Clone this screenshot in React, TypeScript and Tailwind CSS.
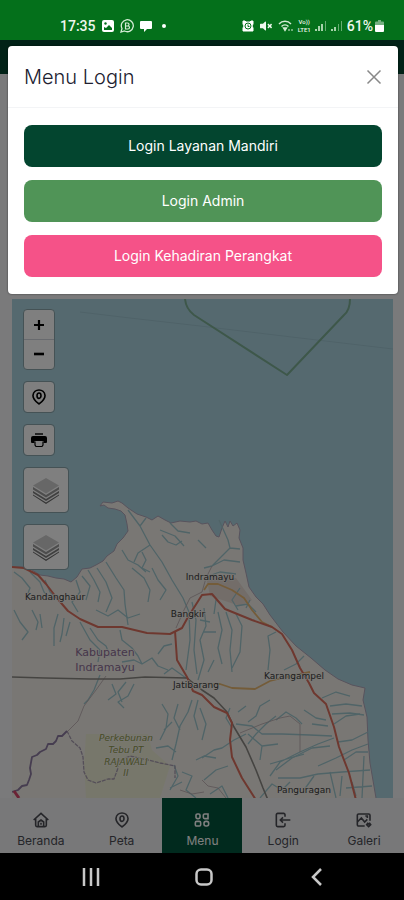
import type { ReactNode } from "react"
import { FaVolumeMute } from "react-icons/fa"

const SEA = "#aad3df"
const LAND = "#f2efe9"

const coast =
  "M12 567 24 567 32 570 40 575 48 576 56 578 64 579 71 582 77 577 82 569 90 568 96 565 103 561 107 556 114 551 117 544 123 538 128 531 127 524 125 515 121 511 115 509 108 508 104 505 100 506 103 502 112 503 118 501 122 503 128 508 137 514 146 517 152 520 158 516 165 520 171 523 180 521 190 522 196 521 202 524 208 523 212 530 216 536 219 537 222 528 225 521 228 527 230 521 233 526 237 523 240 530 239 538 243 548 243 560 246 573 249 587 256 597 263 604 270 615 283 632 296 646 311 658 325 670 338 679 352 685 365 688 363 700 367 717 368 740 370 763 376 798 V850 H-60 V567Z"

const rivers = [
  "M128 510 140 526 150 545 162 562 172 580 183 598 189 612 190 640 186 670",
  "M140 526 146 518M150 545 138 553 134 562M162 535 168 542 176 545 182 541M160 530 175 536 184 546M170 523 178 531 190 533",
  "M88 570 94 580 100 592 98 602M97 568 106 582 112 598 106 612M106 562 116 578 124 590 125 604 128 625",
  "M122 550 128 560 138 565 146 572M132 568 144 578 150 590 148 602M142 552 146 560 142 568 150 572M152 568 158 580 166 590 160 600",
  "M14 572 22 578 30 588 26 598M30 572 40 582 44 592 52 600M45 580 50 592 58 600M14 610 20 622 28 632 22 640M32 610 38 622 36 630M40 614 42 628",
  "M58 614 54 628 54 646M64 618 62 634 60 642M70 622 66 636M80 622 90 640 100 650 98 662M90 628 98 640 106 646 110 656",
  "M76 580 80 592 72 602 78 612M82 576 90 586 86 600M96 610 108 616 118 610 128 618 140 614",
  "M120 630 122 640 132 648 138 656 142 664M122 662 134 660 142 664 152 658 158 666 168 670M158 654 164 646 172 644M164 674 172 668 186 678",
  "M100 675 94 690 88 700 84 704M126 682 118 692 122 702M134 684 128 696 118 702 124 708M112 684 116 694 108 700",
  "M162 704 168 714 166 728 160 740M178 704 174 718 180 730M172 722 164 730M192 700 188 712 180 726 176 744 172 760M156 748 168 746 176 752",
  "M174 765 178 776 170 790M182 772 192 776 186 790 196 798M170 788 182 782M196 760 204 756 216 758",
  "M219 520 228 540 230 548 222 556 212 566 204 568M230 548 240 549M212 566 224 560 240 562M198 540 206 548M208 576 220 572 236 574",
  "M192 602 196 620 194 650 197 674M204 608 206 626 200 640 204 660 198 680M218 612 222 630 218 648 222 664M226 612 232 630 230 650 232 672",
  "M204 632 216 632M236 614 242 626 240 652 232 668M276 632 268 636 270 650 268 670M200 620 210 622M214 660 208 672",
  "M240 588 232 600 238 610M236 606 248 604 256 612M250 600 246 608M216 600 214 614",
  "M284 670 296 664 304 656M322 698 336 692 350 696M330 706 346 704 362 706M332 714 350 713 364 715",
  "M270 700 260 706 256 716 248 722M276 716 266 724 256 734 248 744M276 720 286 712 296 718 302 724",
  "M202 758 214 750 222 748 234 740 246 734M204 780 216 770 228 766M236 724 252 726 262 734 282 734 310 735 332 736",
  "M248 734 262 746 260 760M262 746 278 744M270 776 280 762 300 752 318 744 334 738M270 764 290 758 304 754",
  "M276 770 292 758 312 748 330 746M318 766 336 758 352 750 368 744M278 778 300 778 318 774 342 772 370 770",
  "M334 724 346 716 360 714M338 742 352 740 368 732M344 760 356 752 368 752M304 710 316 718 326 720M312 724 328 726",
  "M304 790 314 776M330 772 336 798M342 776 340 796M352 782 356 796M364 756 362 798M346 788 372 786",
  "M230 708 226 718 232 728M238 712 246 706M198 700 194 716 198 730M200 708 206 724 202 740",
  "M260 798 272 784 282 790 290 782M210 794 222 786 228 798",
]

const minorRoads = [
  "M68 731 78 721 84 706 96 690 106 676",
  "M202 592 190 598 184 610 176 628M202 592 206 578 212 566",
  "M240 733 262 724 280 718 290 716 300 724 300 752",
  "M202 780 208 786 218 788 226 798",
  "M180 790 192 794 204 792",
]

function MapDrawing() {
  return (
    <svg
      viewBox="12 299 381 499"
      preserveAspectRatio="xMidYMin slice"
      className="absolute inset-0 h-full w-full"
      role="img"
      aria-label="Peta Kabupaten Indramayu"
      fill="none"
      strokeLinejoin="round"
    >
      <rect x="-60" y="299" width="600" height="600" fill={SEA} />
      <path d={coast} fill={LAND} stroke="#b0a6ba" strokeWidth="1" />
      <path d="M206 576 236 578 252 600 240 606 210 596Z" fill="#e6dad3" />
      <path d="M86 734 148 734 152 750 170 766 160 798 86 798 84 764Z" fill="#eef0cf" opacity=".7" />

      <path d="M80 312 130 318 200 326 300 338 393 349" stroke="#9fc5d1" strokeWidth="1" />
      <path d="M185 299 Q186 309 194 315 L287 375 344 315 Q350 310 350 299" stroke="#7caf94" strokeWidth="2" />

      <g stroke="#a0c8cf" strokeWidth="1.3">
        {rivers.map((d) => (
          <path key={d} d={d} />
        ))}
      </g>
      <g stroke="#b7a8ac" strokeWidth=".8">
        {minorRoads.map((d) => (
          <path key={d} d={d} />
        ))}
      </g>

      <path
        d="M67 731 72 741 80 748 83 757 84 772 88 780 96 783 108 779 114 779 118 768 117 762 130 756 148 760 160 763 175 766 175 778"
        stroke="#a99db0"
        strokeWidth="1.3"
        strokeDasharray="4 1"
      />
      <path
        d="M12 792 18 790 22 786 27 785 29 780 31 774 30 768 32 757 37 755 40 752 46 749 48 744 53 744 56 741 58 736 62 736 67 731"
        stroke="#8d7aa0"
        strokeWidth="1.8"
      />
      <path d="M14 791 19 798" stroke="#d6476b" strokeWidth="3" />

      <path
        d="M12 677 45 678 90 679 120 679 145 677 187 678 202 690 214 698 227 712 234 727 246 747 256 770 263 788 268 800"
        stroke="#8b8883"
        strokeWidth="1.6"
      />
      <g stroke="#e8b873" strokeWidth="1.8">
        <path d="M204 590 208 584 218 584 232 590 244 598 252 610 262 622 272 627" />
        <path d="M202 684 220 684 232 688 255 689 270 681 286 677 310 672" />
      </g>
      <g stroke="#dd705f" strokeWidth="2">
        <path d="M12 567 24 568 38 575 46 584 56 597 68 611 80 619 98 627 122 627 147 633 170 634 182 628 188 617 202 595 212 594 225 609 252 620 272 627 282 634 292 650 300 668 309 683 314 693 326 704 334 727 339 747 349 773 356 800" />
        <path d="M175 631 177 660 187 677 193 691 202 695 214 707 227 713 232 723 230 740 232 757 242 778 256 800" />
      </g>

      <g
        className="font-['DejaVu_Sans',sans-serif]"
        fill="#3a3a3a"
        stroke="#f2efe9"
        strokeWidth="1.5"
        paintOrder="stroke"
        textAnchor="middle"
        fontSize="9"
      >
        <text x="210" y="580">Indramayu</text>
        <text x="55" y="600">Kandanghaur</text>
        <text x="188" y="617">Bangkir</text>
        <text x="196" y="688">Jatibarang</text>
        <text x="294" y="679">Karangampel</text>
        <text x="304" y="793">Panguragan</text>
        <g fill="#8d6c96" fontSize="11">
          <text x="105" y="656">Kabupaten</text>
          <text x="105" y="671">Indramayu</text>
        </g>
        <g fill="#8f9a4a" fontStyle="italic">
          <text x="126" y="741">Perkebunan</text>
          <text x="126" y="753">Tebu PT</text>
          <text x="126" y="765">RAJAWALI</text>
          <text x="126" y="776">II</text>
        </g>
      </g>
    </svg>
  )
}

function LayersIcon() {
  return (
    <svg viewBox="0 0 28 28" className="h-7 w-7" aria-hidden="true">
      <path d="M1 9.500 14 2 27 9.500 14 17.500Z" fill="#cfcfcf" />
      <path d="M1 11 14 19 27 11V13.500L14 21.500 1 13.500Z" fill="#9a9a9a" />
      <path d="M1 15 14 23 27 15V17L14 25 1 17Z" fill="#7e7e7e" />
      <path d="M1 18.500 14 26.500 27 18.500V19.500L14 28 1 19.500Z" fill="#6b6b6b" />
    </svg>
  )
}

function PinIcon({ className }: { className: string }) {
  return (
    <svg viewBox="0 0 24 24" className={className} fill="none" stroke="currentColor" strokeWidth="2.400" aria-hidden="true">
      <path d="M12 22.500C9 20 2.500 15.500 3 9.500 3.500 4.500 7.500 1.500 12 1.500s8.500 3 9 8C21.500 15.500 15 20 12 22.500Z" />
      <ellipse cx="12" cy="10" rx="3" ry="4" />
    </svg>
  )
}

function PrinterIcon() {
  return (
    <svg viewBox="0 0 16 16" className="h-4 w-4" fill="currentColor" aria-hidden="true">
      <path d="M4 1h8v2H4Z" opacity=".7" />
      <path d="M2 4h12a2 2 0 0 1 2 2v4a1 1 0 0 1-1 1h-2.500V9h-9v2H1a1 1 0 0 1-1-1V6a2 2 0 0 1 2-2Z" />
      <path d="M4 9.500V13l1 1.500h6l1-1.500V9.500" fill="none" stroke="currentColor" strokeWidth="1.200" />
    </svg>
  )
}

function MapButton({ label, large, children }: { label: string; large?: boolean; children: ReactNode }) {
  return (
    <button
      type="button"
      aria-label={label}
      className={`flex items-center justify-center rounded border border-[#8aa4aa] bg-white bg-clip-padding text-black ${
        large ? "h-[46px] w-[46px]" : "h-8 w-8"
      }`}
    >
      {children}
    </button>
  )
}

function MapControls() {
  return (
    <div className="relative flex flex-col items-start gap-[11px] px-[11px] pt-[10px]">
      <div className="flex w-8 flex-col rounded border border-[#8aa4aa] bg-white text-black">
        <button type="button" aria-label="Zoom in" className="flex h-[30px] items-center justify-center border-b border-gray-300">
          <svg viewBox="0 0 12 12" className="h-3 w-3" stroke="currentColor" strokeWidth="2.200" aria-hidden="true">
            <path d="M1 6h10M6 1v10" />
          </svg>
        </button>
        <button type="button" aria-label="Zoom out" className="flex h-[29px] items-center justify-center">
          <svg viewBox="0 0 12 12" className="h-3 w-3" stroke="currentColor" strokeWidth="2.600" aria-hidden="true">
            <path d="M1 5h10" />
          </svg>
        </button>
      </div>
      <MapButton label="Lokasi">
        <PinIcon className="h-4 w-4" />
      </MapButton>
      <MapButton label="Cetak">
        <PrinterIcon />
      </MapButton>
      <MapButton label="Lapisan peta" large>
        <LayersIcon />
      </MapButton>
      <MapButton label="Lapisan data" large>
        <LayersIcon />
      </MapButton>
    </div>
  )
}

function StatusBar() {
  return (
    <div className="flex h-10 items-end justify-between bg-[#04701b] pr-5 pb-1 pl-[60px] font-[Roboto,sans-serif] text-sm font-medium text-[#eef7ee]">
      <div className="flex items-center gap-[6px]">
        <span>17:35</span>
        <svg viewBox="0 0 12 12" className="h-3 w-3" aria-hidden="true">
          <rect width="12" height="12" rx="2" fill="#fff" />
          <circle cx="3.500" cy="3.500" r="1.200" fill="#04701b" />
          <path d="M2 9V7l2 1 3-3 3 3v2H2Z" fill="#04701b" />
        </svg>
        <svg viewBox="0 0 14 14" className="h-3.5 w-3.5" fill="none" stroke="#d5ecd6" aria-hidden="true">
          <path d="M1 13 2 9.500A6 6 0 1 1 4.500 12Z" strokeWidth="1.300" />
          <path d="M5.500 4h2a1.400 1.400 0 0 1 0 3h-2Zm0 3h2.500a1.400 1.400 0 0 1 0 3H5.500Z" strokeWidth="1.200" />
        </svg>
        <svg viewBox="0 0 12 12" className="h-3 w-3" fill="#fff" aria-hidden="true">
          <path d="M1 1h10a1 1 0 0 1 1 1v6a1 1 0 0 1-1 1H7l-3 3V9H1a1 1 0 0 1-1-1V2a1 1 0 0 1 1-1Z" />
        </svg>
        <span className="ml-1 h-1 w-1 rounded-full bg-white" />
      </div>
      <div className="flex items-center gap-1">
        <svg viewBox="0 0 12 12" className="h-3 w-3" aria-hidden="true">
          <path d="M1 1h2l1 1h4l1-1h2v3l-1 2 1 2v3H1V8l1-2-1-2Z" fill="#fff" stroke="#fff" />
          <circle cx="6" cy="6" r="3" fill="none" stroke="#04701b" />
          <path d="M6 4.500v2h1.500" fill="none" stroke="#04701b" />
        </svg>
        <FaVolumeMute className="ml-0.5 h-3 w-3" />
        <svg viewBox="0 0 16 12" className="ml-0.5 h-3 w-4" fill="none" stroke="#d5ecd6" strokeWidth="1.400" aria-hidden="true">
          <path d="M1 4a8 8 0 0 1 12 0M3.500 6.500a5 5 0 0 1 7 0" />
          <path d="M5.500 8 7 10.500 8.500 8Z" fill="#d5ecd6" />
          <path d="M11 9v2M14 9v2" strokeWidth="1" />
        </svg>
        <span className="flex flex-col text-center text-[6px] leading-[8px]">
          <span>Vo))</span>
          <span>LTE1</span>
        </span>
        <svg viewBox="0 0 12 12" className="h-3 w-3" fill="#a8d3ac" aria-hidden="true">
          <path d="M0 9h2v2H0Zm3-3h2v5H3Zm3-2h2v7H6Z" />
          <path d="M10 1h1v10h-1Z" opacity=".6" />
        </svg>
        <svg viewBox="0 0 12 12" className="h-3 w-3" fill="#a8d3ac" aria-hidden="true">
          <path d="M0 9h2v2H0Zm3-2h2v4H3Z" />
          <path d="M7 4h1v7H7Zm3-3h1v10h-1Z" opacity=".6" />
        </svg>
        <span className="flex items-center gap-0.5">
          61%
          <svg viewBox="0 0 9 12" className="h-3 w-[9px]" fill="#fff" aria-hidden="true">
            <path d="M3 0h3v1.500h2a1 1 0 0 1 1 1V5H0V2.500a1 1 0 0 1 1-1h2Z" opacity=".45" />
            <path d="M0 5h9v6a1 1 0 0 1-1 1H1a1 1 0 0 1-1-1Z" />
          </svg>
        </span>
      </div>
    </div>
  )
}

function NavIcon({ children }: { children: ReactNode }) {
  return (
    <svg viewBox="0 0 24 24" className="h-4 w-4" fill="none" stroke="currentColor" strokeWidth="2.400" aria-hidden="true">
      {children}
    </svg>
  )
}

const navItems = [
  {
    label: "Beranda",
    icon: (
      <NavIcon>
        <path d="M1 12 12 2l11 10M4 10v10a2 2 0 0 0 2 2h12a2 2 0 0 0 2-2V10" />
        <path d="M8 22v-7l4-3 4 3v7M12 16v3" />
      </NavIcon>
    ),
  },
  { label: "Peta", icon: <PinIcon className="h-4 w-4" /> },
  {
    label: "Menu",
    active: true,
    icon: (
      <NavIcon>
        <rect x="3" y="3" width="6" height="7" rx="2" />
        <path d="M21 3v7h-5a2 2 0 0 1-2-2V5a2 2 0 0 1 2-2Z" />
        <rect x="2" y="14" width="8" height="7" rx="2" />
        <rect x="15" y="14" width="7" height="7" rx="3" />
      </NavIcon>
    ),
  },
  {
    label: "Login",
    icon: (
      <NavIcon>
        <path d="M15 7V4a2 2 0 0 0-2-2H4a2 2 0 0 0-2 2v16a2 2 0 0 0 2 2h9a2 2 0 0 0 2-2v-3" />
        <path d="M23 12H8M12 8l-4 4 4 4" />
      </NavIcon>
    ),
  },
  {
    label: "Galeri",
    icon: (
      <NavIcon>
        <path d="M13 21H4a2 2 0 0 1-2-2V5a2 2 0 0 1 2-2h15a2 2 0 0 1 2 2v8" />
        <path d="M2 15l6-6 5 6 4-4M14 6h3v3" />
        <path d="M19 22l-3-3 1.500-2 1.500 1 1.500-1L22 19Z" />
      </NavIcon>
    ),
  },
]

function BottomNav() {
  return (
    <nav className="grid h-[55px] grid-cols-5 bg-[#f0f0f2]">
      {navItems.map((item) => (
        <a
          key={item.label}
          href="#"
          className={`flex flex-col items-center gap-[5px] pt-[14px] pl-px text-xs ${
            item.active ? "bg-[#03543c] text-white" : "text-[#4a4b52]"
          }`}
        >
          {item.icon}
          <span>{item.label}</span>
        </a>
      ))}
    </nav>
  )
}

function LoginDialog() {
  return (
    <div
      role="dialog"
      aria-labelledby="login-title"
      className="absolute top-1.5 right-1.5 left-2 rounded bg-white shadow-[0_0_2px_rgba(0,0,0,0.6)]"
    >
      <div className="flex h-[62px] items-center justify-between border-b border-gray-100 px-4">
        <h2 id="login-title" className="text-xl font-light text-[#212130]">
          Menu Login
        </h2>
        <button type="button" aria-label="Tutup" className="text-[#888]">
          <svg viewBox="0 0 16 16" className="h-4 w-4" stroke="currentColor" strokeWidth="1.500" aria-hidden="true">
            <path d="M1.500 1.500l13 13M14.500 1.500l-13 13" />
          </svg>
        </button>
      </div>
      <div className="flex flex-col gap-[13px] px-4 pt-[17px] pb-[17px] text-sm text-white">
        <button type="button" className="h-[42px] rounded-lg bg-[#03452f]">
          Login Layanan Mandiri
        </button>
        <button type="button" className="h-[42px] rounded-lg bg-[#509457]">
          Login Admin
        </button>
        <button type="button" className="h-[42px] rounded-lg bg-[#f55288]">
          Login Kehadiran Perangkat
        </button>
      </div>
    </div>
  )
}

function SystemBar() {
  return (
    <div className="flex h-[47px] items-center justify-around bg-black pr-[30px] pl-[34px] text-[#c8c8c8]">
      <button type="button" aria-label="Aplikasi terbaru">
        <svg viewBox="0 0 18 18" className="h-[18px] w-[18px]" stroke="currentColor" strokeWidth="2.500" aria-hidden="true">
          <path d="M2 0v18M9 0v18M16 0v18" />
        </svg>
      </button>
      <button type="button" aria-label="Layar utama">
        <svg viewBox="0 0 18 18" className="h-[18px] w-[18px]" fill="none" stroke="currentColor" strokeWidth="2.500" aria-hidden="true">
          <rect x="1.500" y="1.500" width="15" height="15" rx="4.500" />
        </svg>
      </button>
      <button type="button" aria-label="Kembali">
        <svg viewBox="0 0 18 18" className="h-[18px] w-[18px]" fill="none" stroke="currentColor" strokeWidth="2.500" aria-hidden="true">
          <path d="M13 1 5 9l8 8" />
        </svg>
      </button>
    </div>
  )
}

export default function App() {
  return (
    <div className="flex min-h-screen flex-col bg-black font-[Inter,sans-serif]">
      <StatusBar />
      <div className="relative flex flex-1 flex-col bg-[#f5f5f7]">
        <header className="h-[34px] bg-[#03452f]" />
        <main className="flex flex-1 flex-col pt-[225px] pr-[11px] pl-3">
          <section className="relative flex-1 overflow-hidden pb-4">
            <MapDrawing />
            <MapControls />
          </section>
        </main>
        <BottomNav />
        <div className="absolute inset-0 bg-black/50" />
        <LoginDialog />
      </div>
      <SystemBar />
    </div>
  )
}
